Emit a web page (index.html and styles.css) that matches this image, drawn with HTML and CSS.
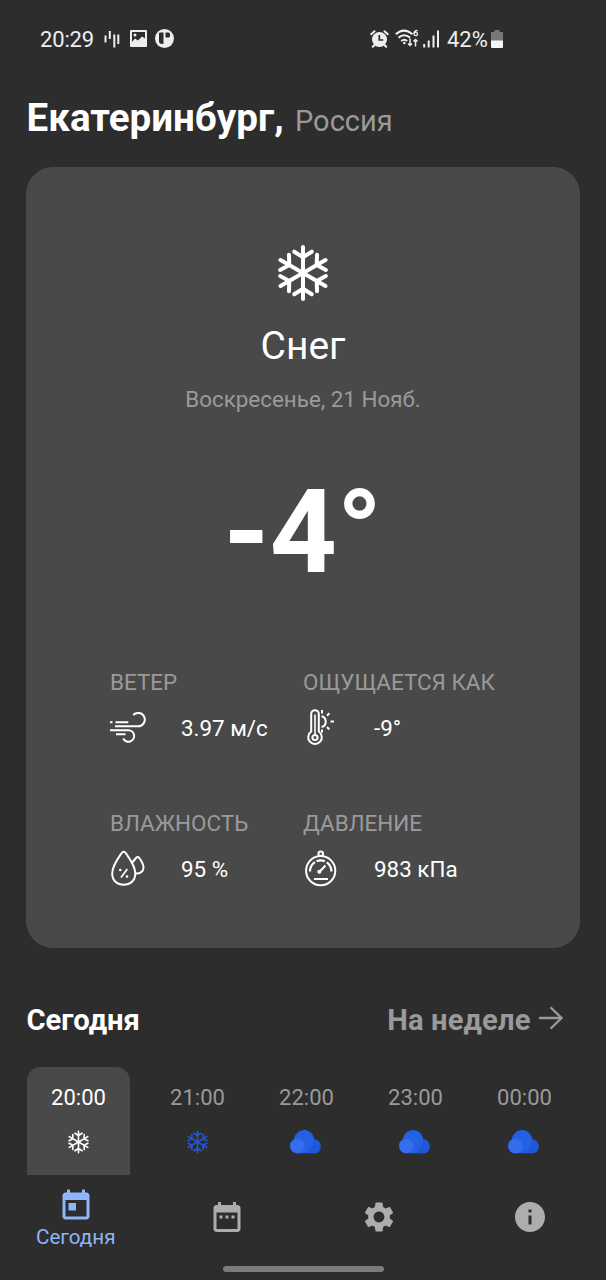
FILE: index.html
```html
<!DOCTYPE html>
<html lang="ru">
<head>
<meta charset="utf-8">
<title>Погода</title>
<link rel="stylesheet" href="styles.css">
</head>
<body>
<svg class="defs" width="0" height="0" aria-hidden="true">
  <symbol id="flake" viewBox="-28 -28 56 56">
    <g fill="none" stroke="currentColor" stroke-width="4" stroke-linecap="round" stroke-linejoin="round">
      <path id="arm" d="M0 0V-26M-8.800 -21.300L0 -15.800L8.800 -21.300"/>
      <use href="#arm" transform="rotate(60)"/>
      <use href="#arm" transform="rotate(120)"/>
      <use href="#arm" transform="rotate(180)"/>
      <use href="#arm" transform="rotate(240)"/>
      <use href="#arm" transform="rotate(300)"/>
    </g>
  </symbol>
  <symbol id="cloud" viewBox="0 0 33 24">
    <path fill="#2460e4" d="M7.300 23.300a7.300 7.300 0 0 1-3.600-13.600C4.600 4 9 0 14.300 0c5 0 8.700 3.500 10.100 9.300a7.200 7.200 0 0 1 1.300 14z"/>
    <path fill="#1d52d4" d="M24.400 9.300a7.200 7.200 0 0 1 1.300 14H15q8-4 9.400-14z" opacity=".6"/>
    <circle cx="7.500" cy="16" r="7.300" fill="#346df0"/>
  </symbol>
</svg>

<div class="status">
  <span class="clock">20:29</span>
  <svg class="st-bars" width="16" height="18" viewBox="0 0 16 18" stroke="#eee" stroke-width="2"><path d="M1.500 5.500v7M5.800 1v8M10.300 4.500v13M14.300 4.500v9.500"/></svg>
  <svg class="st-image" width="17" height="17" viewBox="0 0 17 17"><rect width="17" height="17" rx="1" fill="#eee"/><path fill="#2d2d2d" d="M2 2h13v6.500l-3-2-4 4-3-2-3 3.500z"/><circle cx="5" cy="5" r="1.500" fill="#eee"/></svg>
  <svg class="st-app" width="19" height="19" viewBox="0 0 19 19"><circle cx="9.500" cy="9.500" r="9.500" fill="#eee"/><path fill="#2d2d2d" d="M4 4.500q0-1 1-1h3.500V14q0 1-1 1H7q-3 0-3-3zM10.500 3.500h3q1.500 0 1.500 1.500v2q0 1.500-1.500 1.500h-3z"/></svg>
  <svg class="st-alarm" width="19" height="18" viewBox="0 0 19 18"><circle cx="9.500" cy="9.500" r="7.500" fill="#eee"/><path stroke="#eee" stroke-width="2" stroke-linecap="round" d="M1.200 4.200L4.500 1.200M17.800 4.200L14.500 1.200M4.500 15l-1.700 1.800M14.500 15l1.700 1.800"/><path d="M9.300 5v5h4" fill="none" stroke="#2d2d2d" stroke-width="1.700"/></svg>
  <svg class="st-wifi" width="24" height="19" viewBox="0 0 24 19" fill="none" stroke="#eee" stroke-width="2"><path d="M.800 5.200Q9 -2 17.500 5.200M3.500 8.600Q9.200 4 15 8.600M6.200 12Q9.300 9.500 12.200 12"/><circle cx="9.300" cy="14" r="1.300" fill="#eee" stroke="none"/><path stroke-width="1.500" d="M15 9.500v7M13 14.500l2 2 2-2M20.500 17.500v-7M18.500 12.500l2-2 2 2"/><path stroke-width="1.300" d="M22.500 1.500q-3.500 0-3.500 3.500"/><circle cx="20.800" cy="5" r="1.700" stroke-width="1.300"/></svg>
  <svg class="st-signal" width="17" height="18" viewBox="0 0 17 18" stroke="#eee" stroke-width="2"><path d="M1.200 14v3.500M5.700 10.500v7M10.500 5.500v12M15 .500v17"/></svg>
  <span class="percent">42%</span>
  <svg class="st-battery" width="12" height="18" viewBox="0 0 12 18"><path fill="#777" d="M3.500 0h5v2H12v9H0V2h3.500z"/><path fill="#f5f5f5" d="M0 10.500h12V17q0 1-1 1H1q-1 0-1-1z"/></svg>
</div>

<header class="place"><h1 class="city">Екатеринбург,</h1><span class="country">Россия</span></header>

<main class="card">
  <svg class="card-icon" width="56" height="56"><use href="#flake"/></svg>
  <div class="condition">Снег</div>
  <div class="date">Воскресенье, 21 Нояб.</div>
  <div class="temp">-4°</div>
  <div class="metrics">
    <section class="metric">
      <h2 class="label">ВЕТЕР</h2>
      <div class="reading">
        <svg width="36" height="48" viewBox="0 0 36 48" fill="none" stroke="#fff" stroke-width="2"><path d="M0 17.300h2.500M5.500 17.300h12.800M5 21.300h23a6.700 6.700 0 1 0-4.800-11.300M0 25.300h18.500a5.700 5.700 0 1 1-5.200 8.200M6 29.300h9.500"/></svg>
        <span>3.97 м/с</span>
      </div>
    </section>
    <section class="metric">
      <h2 class="label">ОЩУЩАЕТСЯ КАК</h2>
      <div class="reading">
        <svg width="36" height="48" viewBox="0 0 36 48" fill="none" stroke="#fff" stroke-width="2"><path d="M8.200 26.500V9a3.800 3.800 0 0 1 7.600 0v17.500a6.800 6.800 0 1 1-7.600 0z"/><circle cx="12" cy="32.500" r="2.600"/><path d="M12 9.500v20" stroke-width="1.600"/><path d="M18.500 11.300a5.500 5.500 0 0 1 0 10.700M19 5v3.500M26.300 8.300L24 10.700M27.500 16.500h3.500M24 22l2.300 2.500M19 24.500v3"/></svg>
        <span>-9°</span>
      </div>
    </section>
    <section class="metric">
      <h2 class="label">ВЛАЖНОСТЬ</h2>
      <div class="reading">
        <svg width="36" height="48" viewBox="0 0 36 48" fill="none" stroke="#fff" stroke-width="2" stroke-linejoin="round"><path d="M11.700 7q2-2.500 4 0C20 13 25.300 20 25.300 27.500c0 7-5 11.200-11.600 11.200S2.200 34.500 2.200 27.500C2.200 20 7.500 13 11.700 7z"/><path d="M22.300 16.500L26 12q1.700-2 3.300 0c2.200 3 4.200 6.500 4.200 9.500 0 4-3.500 6.300-8 6"/><path stroke-width="1.700" d="M17.300 23L11 31.500"/><g fill="#fff" stroke="none"><circle cx="10.300" cy="24" r="1.300"/><circle cx="17" cy="30.500" r="1.300"/></g></svg>
        <span>95 %</span>
      </div>
    </section>
    <section class="metric">
      <h2 class="label">ДАВЛЕНИЕ</h2>
      <div class="reading">
        <svg width="36" height="48" viewBox="0 0 36 48" fill="none" stroke="#fff" stroke-width="2"><circle cx="17.700" cy="24.700" r="14.600"/><circle cx="17.700" cy="7.700" r="2.300"/><path stroke-width="2.200" d="M7 25.500v-1a10.700 10.700 0 0 1 5-8.400M13.500 15.300a10.700 10.700 0 0 1 8.400 0M23.700 16.300a10.700 10.700 0 0 1 4.700 8.200v1"/><path d="M16.300 26L22.500 19.500"/><circle cx="16.300" cy="25.800" r="2" fill="#fff" stroke="none"/><path d="M11 33h14"/></svg>
        <span>983 кПа</span>
      </div>
    </section>
  </div>
</main>

<div class="tabs">
  <h2 class="tab-now">Сегодня</h2>
  <div class="tab-week"><span>На неделе</span>
    <svg width="24" height="24" viewBox="0 0 24 24" fill="none" stroke="#9a9a9a" stroke-width="2.300"><path d="M0 12h22.500M11.500 1.200L22.500 12L11.500 22.800"/></svg>
  </div>
</div>

<div class="hours">
  <div class="hour active"><span>20:00</span><svg width="23" height="23"><use href="#flake"/></svg></div>
  <div class="hour"><span>21:00</span><svg class="blue" width="23" height="23"><use href="#flake"/></svg></div>
  <div class="hour"><span>22:00</span><svg width="33" height="24"><use href="#cloud"/></svg></div>
  <div class="hour"><span>23:00</span><svg width="33" height="24"><use href="#cloud"/></svg></div>
  <div class="hour"><span>00:00</span><svg width="33" height="24"><use href="#cloud"/></svg></div>
  <div class="hour"></div>
</div>

<nav class="nav">
  <div class="nav-item current">
    <svg width="36" height="36" viewBox="0 0 24 24" fill="currentColor"><path d="M19 3h-1V1h-2v2H8V1H6v2H5c-1.110 0-1.990.9-1.990 2L3 19c0 1.100.890 2 2 2h14c1.100 0 2-.9 2-2V5c0-1.100-.9-2-2-2zm0 16H5V8h14v11zM7 10h5v5H7z"/></svg>
    <span>Сегодня</span>
  </div>
  <div class="nav-item"><svg width="36" height="36" viewBox="0 0 24 24" fill="currentColor"><path d="M9 11H7v2h2v-2zm4 0h-2v2h2v-2zm4 0h-2v2h2v-2zm2-7h-1V2h-2v2H8V2H6v2H5c-1.110 0-1.990.9-1.990 2L3 20c0 1.100.890 2 2 2h14c1.100 0 2-.9 2-2V6c0-1.100-.9-2-2-2zm0 16H5V9h14v11z"/></svg></div>
  <div class="nav-item"><svg width="36" height="36" viewBox="0 0 24 24" fill="currentColor"><path d="M19.140 12.940c.04-.3.060-.610.060-.940 0-.320-.020-.640-.070-.940l2.030-1.580c.180-.140.230-.410.120-.610l-1.920-3.320c-.120-.220-.370-.290-.590-.220l-2.390.960c-.5-.380-1.030-.7-1.620-.940l-.360-2.540c-.040-.240-.240-.410-.480-.410h-3.840c-.240 0-.430.170-.470.410l-.360 2.540c-.590.240-1.130.570-1.620.940l-2.390-.960c-.220-.080-.470 0-.590.220L2.740 8.870c-.120.210-.080.470.120.610l2.030 1.580c-.050.3-.090.630-.090.940s.020.640.070.940l-2.030 1.580c-.180.140-.230.410-.120.610l1.920 3.320c.120.220.370.290.590.220l2.390-.960c.5.380 1.030.7 1.620.940l.360 2.540c.050.240.240.410.480.410h3.840c.240 0 .440-.170.470-.410l.360-2.540c.590-.240 1.130-.560 1.620-.940l2.390.960c.220.080.470 0 .590-.220l1.920-3.320c.120-.220.070-.470-.120-.610l-2.010-1.580zM12 15.600c-1.980 0-3.600-1.620-3.600-3.600s1.620-3.600 3.600-3.600 3.600 1.620 3.600 3.600-1.620 3.600-3.600 3.600z"/></svg></div>
  <div class="nav-item"><svg width="36" height="36" viewBox="0 0 24 24" fill="currentColor"><path d="M12 2C6.480 2 2 6.480 2 12s4.480 10 10 10 10-4.480 10-10S17.520 2 12 2zm1 15h-2v-6h2v6zm0-8h-2V7h2v2z"/></svg></div>
</nav>
<div class="home-bar"></div>
</body>
</html>
```

FILE: styles.css
```css
* { box-sizing: border-box; }
body {
  margin: 0;
  width: 606px;
  height: 1280px;
  overflow: hidden;
  background: #2d2d2d;
  color: #fff;
  font-family: Roboto, "Noto Sans", sans-serif;
  display: flex;
  flex-direction: column;
}
h1, h2 { margin: 0; }
svg { display: block; flex: none; }
.defs { display: none; }

.status {
  height: 78px;
  padding-left: 40px;
  display: flex;
  align-items: center;
  color: #eee;
  font-size: 22px;
  white-space: nowrap;
}
.status svg { margin-top: -1px; }
.clock { width: 64px; letter-spacing: -.15px; }
.st-image { margin-left: 10px; }
.st-app { margin-left: 8px; }
.st-alarm { margin-left: 196px; }
.st-wifi { margin-left: 6px; }
.st-signal { margin-left: 4px; }
.percent { width: 44px; margin-left: 7px; }

.place {
  height: 79px;
  margin-bottom: 10px;
  padding-left: 26.5px;
  display: flex;
  align-items: baseline;
  line-height: 79px;
  white-space: nowrap;
}
.city { width: 268.5px; font-size: 38.600px; font-weight: 700; }
.country { font-size: 29px; color: #9a9a9a; }

.card {
  height: 781px;
  flex: none;
  margin: 0 26px;
  padding-top: 78px;
  border-radius: 27px;
  background: #494949;
  display: flex;
  flex-direction: column;
  align-items: center;
}
.condition { margin-top: 20px; font-size: 39px; line-height: 50px; }
.date { margin-top: 13px; font-size: 22.400px; line-height: 30px; color: #9a9a9a; }
.temp { margin-top: 58px; font-size: 117px; font-weight: 700; line-height: 120px; }
.metrics {
  width: 386px;
  margin-top: 75px;
  display: grid;
  grid-template-columns: 193px 193px;
  row-gap: 55px;
}
.label { font-size: 22.450px; line-height: 30px; font-weight: 400; color: #9a9a9a; white-space: nowrap; }
.reading {
  height: 48px;
  margin-top: 8px;
  display: flex;
  align-items: center;
  gap: 35px;
  font-size: 22.400px;
  line-height: 26px;
  white-space: nowrap;
}
.reading span { margin-bottom: 2px; }

.tabs {
  height: 40px;
  margin: 52px 43.5px 27px 26.5px;
  display: flex;
  justify-content: space-between;
  font-size: 29.200px;
  font-weight: 700;
  line-height: 41px;
}
.tab-now { font-size: inherit; }
.tab-week { display: flex; gap: 8px; color: #9a9a9a; }
.tab-week span { letter-spacing: .1px; }
.tab-week svg { margin-top: 6px; }

.hours {
  height: 108px;
  flex: none;
  margin-left: 27px;
  display: flex;
  align-items: flex-end;
  gap: 27px;
  overflow: hidden;
}
.hour {
  flex: none;
  width: 82px;
  height: 97px;
  padding: 5px 1px 0 0;
  display: flex;
  flex-direction: column;
  align-items: center;
  color: #9a9a9a;
  font-size: 22px;
  line-height: 30px;
  box-shadow: 0 3px 3px rgba(0, 0, 0, .1);
}
.hour svg { height: 24px; margin-top: 17px; }
.hour.active {
  width: 103px;
  height: 108px;
  padding: 16px 0 0;
  border-radius: 14px 14px 0 0;
  background: #494949;
  color: #fff;
  box-shadow: none;
}
.blue { color: #1f56dc; }

.nav {
  height: 91px;
  flex: none;
  display: grid;
  grid-template-columns: repeat(4, 1fr);
  justify-items: center;
  color: #adadad;
}
.nav-item { padding-top: 24px; }
.nav-item.current {
  padding-top: 12.5px;
  display: flex;
  flex-direction: column;
  align-items: center;
  color: #8fb4f8;
  font-size: 20.600px;
  line-height: 27px;
}
.home-bar { width: 161px; height: 6px; margin: 0 auto; flex: none; border-radius: 3px; background: #7b7b7b; }
```
